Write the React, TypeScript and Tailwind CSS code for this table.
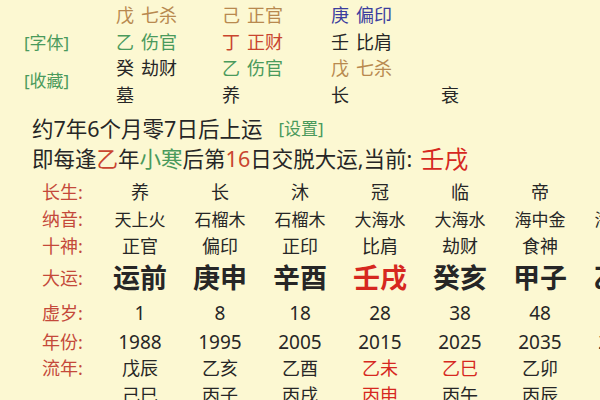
const BROWN = 'text-[#b8894f]';
const GREEN = 'text-[#4a9a5c]';
const BLUE = 'text-[#3b3d9e]';
const RED = 'text-[#c9452f]';
const DARK = 'text-[#262626]';
const HOT = 'text-[#d6281f]';

const TOP = [
  [
    { g: '戊', s: '七杀', c: BROWN },
    { g: '己', s: '正官', c: BROWN },
    { g: '庚', s: '偏印', c: BLUE },
  ],
  [
    { g: '乙', s: '伤官', c: GREEN },
    { g: '丁', s: '正财', c: RED },
    { g: '壬', s: '比肩', c: DARK },
  ],
  [
    { g: '癸', s: '劫财', c: DARK },
    { g: '乙', s: '伤官', c: GREEN },
    { g: '戊', s: '七杀', c: BROWN },
  ],
];

type Cell = { t: string; red?: boolean };

const ROWS: { label: string; h: string; size: string; cells: Cell[] }[] = [
  {
    label: '长生:',
    h: 'h-[27px]',
    size: 'text-[18px]',
    cells: ['养', '长', '沐', '冠', '临', '帝', ''].map(t => ({ t })),
  },
  {
    label: '纳音:',
    h: 'h-[27px]',
    size: 'text-[17px]',
    cells: ['天上火', '石榴木', '石榴木', '大海水', '大海水', '海中金', '海中金'].map(t => ({ t })),
  },
  {
    label: '十神:',
    h: 'h-[26px]',
    size: 'text-[18px]',
    cells: ['正官', '偏印', '正印', '比肩', '劫财', '食神', ''].map(t => ({ t })),
  },
  {
    label: '大运:',
    h: 'h-[38px]',
    size: 'text-[27px] font-bold',
    cells: [
      { t: '运前' },
      { t: '庚申' },
      { t: '辛酉' },
      { t: '壬戌', red: true },
      { t: '癸亥' },
      { t: '甲子' },
      { t: '乙丑' },
    ],
  },
  {
    label: '虚岁:',
    h: 'h-[32px]',
    size: 'text-[19px]',
    cells: ['1', '8', '18', '28', '38', '48', '58'].map(t => ({ t })),
  },
  {
    label: '年份:',
    h: 'h-[26px]',
    size: 'text-[19px]',
    cells: ['1988', '1995', '2005', '2015', '2025', '2035', '2045'].map(t => ({ t })),
  },
  {
    label: '流年:',
    h: 'h-[27px]',
    size: 'text-[18px]',
    cells: [
      { t: '戊辰' },
      { t: '乙亥' },
      { t: '乙酉' },
      { t: '乙未', red: true },
      { t: '乙巳', red: true },
      { t: '乙卯' },
      { t: '乙丑' },
    ],
  },
  {
    label: '',
    h: 'h-[26px]',
    size: 'text-[18px]',
    cells: [
      { t: '己巳' },
      { t: '丙子' },
      { t: '丙戌' },
      { t: '丙申', red: true },
      { t: '丙午' },
      { t: '丙辰' },
      { t: '丙寅' },
    ],
  },
];

export default function App() {
  return (
    <div
      className="w-[600px] h-[400px] overflow-hidden bg-[#fcf8d2] text-[#262626]"
      style={{ fontFamily: '"Noto Sans", "Noto Sans CJK SC", sans-serif' }}
    >
      {/* pillars */}
      <div className="flex pt-[2px]">
        <div className="w-[116px] shrink-0 pl-[24px] pt-[28px] flex flex-col gap-[12px] text-[17px] text-[#4a9a5c]">
          <div className="h-[26px] leading-[26px]">[字体]</div>
          <div className="h-[26px] leading-[26px]">[收藏]</div>
        </div>
        <div className="grid grid-cols-[106px_109px_110px_auto] text-[18px]">
          {TOP.map((row, i) =>
            [...row, null].map((c, j) =>
              c ? (
                <div key={`${i}-${j}`} className={`h-[26.5px] leading-[26.5px] whitespace-nowrap ${c.c}`}>
                  {c.g}
                  <span className="ml-[7px]">{c.s}</span>
                </div>
              ) : (
                <div key={`${i}-${j}`} />
              ),
            ),
          )}
          {['墓', '养', '长', '衰'].map(t => (
            <div key={t} className="h-[26.5px] leading-[26.5px]">
              {t}
            </div>
          ))}
        </div>
      </div>

      {/* start of luck */}
      <div className="pl-[32px] mt-[6px]">
        <div className="h-[30px] flex items-center text-[21.5px] whitespace-nowrap">
          约7年6个月零7日后上运
          <span className="ml-[16px] text-[17px] text-[#4a9a5c]">[设置]</span>
        </div>
        <div className="h-[30px] flex items-center text-[21.5px] whitespace-nowrap">
          即每逢<span className="text-[#c9452f]">乙</span>年<span className="text-[#4a9a5c]">小寒</span>后第
          <span className="text-[#c9452f]">16</span>日交脱大运,当前:
          <span className={`ml-[8px] text-[24px] ${HOT}`}>壬戌</span>
        </div>
      </div>

      {/* luck table */}
      <div className="mt-[5px]">
        {ROWS.map(r => (
          <div key={r.label + r.cells[0].t} className={`flex items-center ${r.h}`}>
            <div className="w-[100px] shrink-0 pl-[42px] text-[18px] text-[#c4493a]">{r.label}</div>
            {r.cells.map((c, i) => (
              <div
                key={i}
                className={`w-[80px] shrink-0 text-center whitespace-nowrap ${r.size} ${c.red ? HOT : ''}`}
              >
                {c.t}
              </div>
            ))}
          </div>
        ))}
      </div>
    </div>
  );
}
